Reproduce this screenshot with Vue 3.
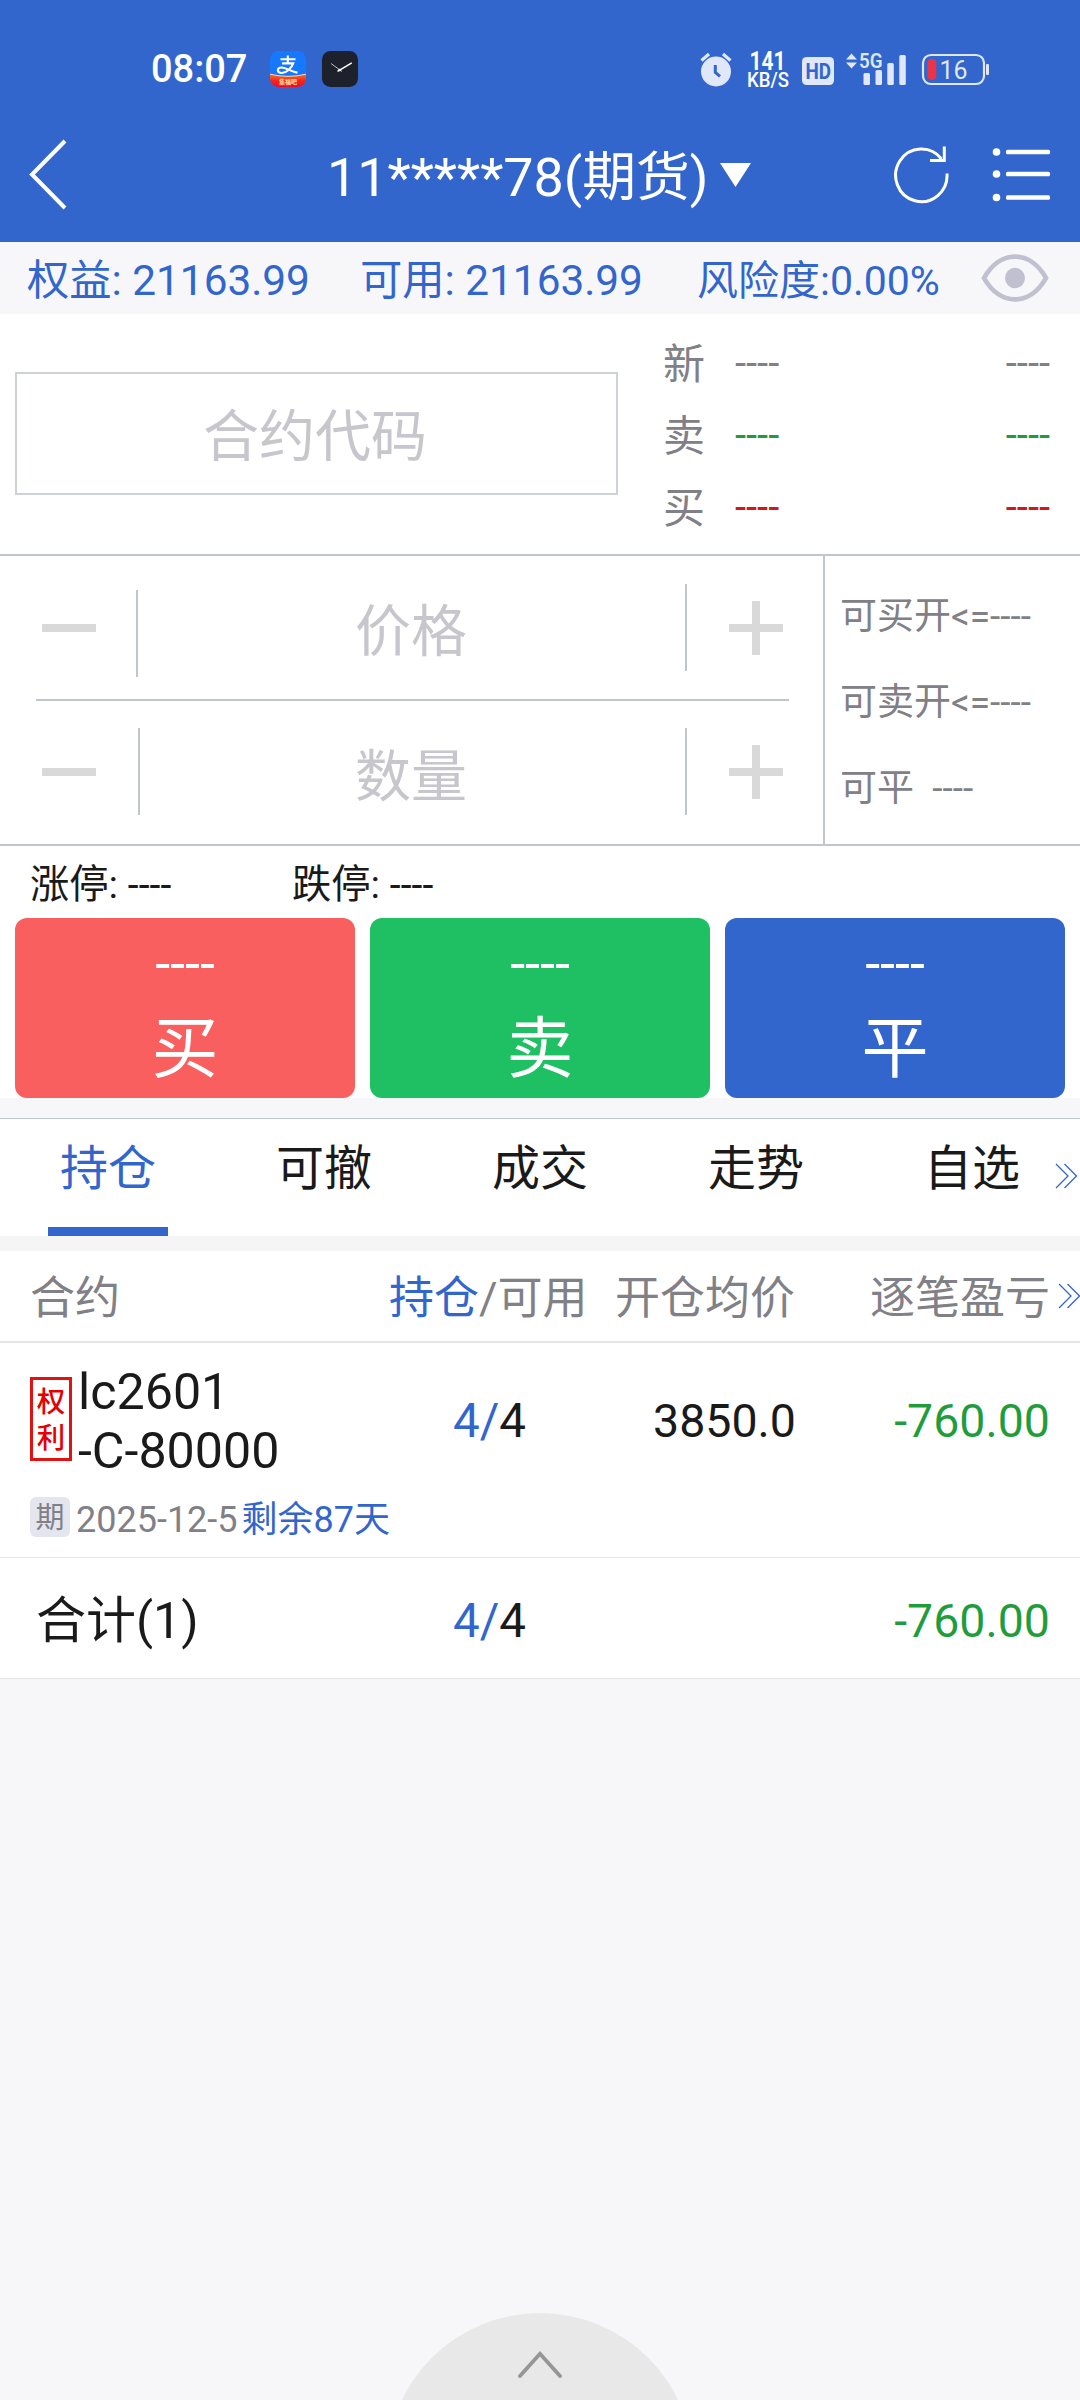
<script setup>
const quotes = [
  { label: '新', tone: 'flat' },
  { label: '卖', tone: 'down' },
  { label: '买', tone: 'up' },
]
const limits = ['可买开<=----', '可卖开<=----', '可平  ----']
const actions = [
  { label: '买', tone: 'buy' },
  { label: '卖', tone: 'sell' },
  { label: '平', tone: 'close' },
]
const tabs = ['持仓', '可撤', '成交', '走势', '自选']
</script>

<template>
  <div class="page">
    <header class="top">
      <div class="status">
        <span class="time">08:07</span>
        <svg class="app-icon" width="36" height="36" viewBox="0 0 36 36">
          <defs>
            <linearGradient id="ribbon" x1="0" y1="0" x2="0" y2="1">
              <stop offset="0" stop-color="#f7702a" />
              <stop offset="0.5" stop-color="#f5271f" />
              <stop offset="1" stop-color="#f0082c" />
            </linearGradient>
            <clipPath id="tile"><rect width="36" height="36" rx="8.5" /></clipPath>
          </defs>
          <g clip-path="url(#tile)">
            <rect width="36" height="36" fill="#1677ff" />
            <path d="M0 23.2Q18 27.5 36 23.2V36H0Z" fill="url(#ribbon)" />
            <path d="M0 23.2Q18 27.5 36 23.2" fill="none" stroke="#ffd9a0" stroke-width="1" />
          </g>
          <path
            d="M10.5 8.2H25.5M17.8 4.5V12.2M12 12.4H23.2C21.5 17.2 16.5 21.8 11.8 22C6.6 22 6.6 16.6 11.4 16.5C16 16.5 20.5 20.6 27.5 21.6"
            fill="none" stroke="#fff" stroke-width="2.1"
          />
          <text x="18" y="33" text-anchor="middle" font-size="6" font-weight="700" fill="#ffe3b0">集福吧</text>
        </svg>
        <svg class="app-icon second" width="36" height="36" viewBox="0 0 36 36">
          <rect width="36" height="36" rx="8.5" fill="#1d212c" />
          <path d="M9 12.5L20 20.5" stroke="#b9bdc6" stroke-width="1" />
          <path d="M15.5 20.3L29.8 11.8" stroke="#fff" stroke-width="1.5" />
          <circle cx="17.7" cy="19" r="1.3" fill="#fff" />
        </svg>
        <svg class="sys" width="292" height="44" viewBox="0 0 292 44" fill="#dfe7f8">
          <circle cx="16" cy="24.5" r="15" />
          <path d="M1.5 13.5L9 7M30.5 13.5L23 7" stroke="#dfe7f8" stroke-width="3.2" />
          <path d="M15.3 18V25.3L20 29.3" fill="none" stroke="#3266cc" stroke-width="3" />
          <text x="49.5" y="22.5" font-size="25" font-weight="700" fill="#fff" textLength="36" lengthAdjust="spacingAndGlyphs">141</text>
          <text x="47" y="40" font-size="19.5" font-weight="500" fill="#fff" textLength="42" lengthAdjust="spacingAndGlyphs">KB/S</text>
          <rect x="102" y="10" width="32" height="28" rx="4.5" />
          <text x="105.5" y="32" font-size="22.5" font-weight="700" fill="#3266cc" textLength="25.5" lengthAdjust="spacingAndGlyphs">HD</text>
          <path d="M151.5 6.5L157 12.5H146ZM151.5 21.5L157 15.5H146Z" />
          <text x="159" y="21" font-size="21" font-weight="600" textLength="23.5" lengthAdjust="spacingAndGlyphs">5G</text>
          <rect x="163.5" y="26" width="6.5" height="12" rx="1.5" />
          <rect x="175.5" y="23" width="6.5" height="15" rx="1.5" />
          <rect x="187.3" y="16" width="6.5" height="22" rx="1.5" />
          <rect x="199.3" y="8" width="6.5" height="30" rx="1.5" />
          <rect x="223" y="8" width="61" height="29" rx="8" fill="none" stroke="#dfe7f8" stroke-width="2.2" />
          <rect x="227.3" y="12" width="9" height="21" rx="4" fill="#ea3447" />
          <rect x="286" y="17" width="3" height="11" rx="1" />
          <text x="239.5" y="31.5" font-size="26" textLength="28" lengthAdjust="spacingAndGlyphs">16</text>
        </svg>
      </div>
      <div class="titlebar">
        <svg class="back" width="40" height="72" viewBox="0 0 40 72" fill="none" stroke="#fff" stroke-width="4">
          <path d="M37 2L4 35.5L37 69" />
        </svg>
        <span class="title">11*****78(期货)</span>
        <svg width="31" height="24" viewBox="0 0 31 24"><path d="M0 0H31L15.5 24Z" fill="#fff" /></svg>
        <svg class="refresh" width="56" height="58" viewBox="0 0 56 58" fill="none" stroke="#fff" stroke-width="3">
          <path d="M53 27.5A25.7 26.3 0 1 1 47.5 13" />
          <path d="M50.3 0.5V14.5H36" />
        </svg>
        <svg class="list" width="60" height="56" viewBox="0 0 60 56" fill="#fff">
          <circle cx="4.5" cy="5" r="3.8" /><circle cx="4.5" cy="27" r="3.8" /><circle cx="4.5" cy="50.5" r="3.8" />
          <rect x="14" y="2.8" width="44" height="4.5" rx="1.5" />
          <rect x="14" y="24.8" width="44" height="4.5" rx="1.5" />
          <rect x="14" y="48.3" width="44" height="4.5" rx="1.5" />
        </svg>
      </div>
    </header>

    <section class="account">
      <span class="equity">权益: 21163.99</span>
      <span class="avail">可用: 21163.99</span>
      <span class="risk">风险度:0.00%</span>
      <svg width="68" height="50" viewBox="0 0 68 50">
        <path d="M3 25C19-3.5 49-3.5 65 25C49 53.5 19 53.5 3 25Z" fill="none" stroke="#c1c0d1" stroke-width="4.6" />
        <ellipse cx="34" cy="25" rx="10" ry="10.3" fill="#c1c0d1" />
      </svg>
    </section>

    <section class="contract">
      <div class="code">合约代码</div>
      <div class="quotes">
        <div v-for="q in quotes" :key="q.label" class="quote">
          <span class="q-label">{{ q.label }}</span>
          <span class="q-val" :class="q.tone">----</span>
          <span class="q-val" :class="q.tone">----</span>
        </div>
      </div>
    </section>

    <section class="order">
      <div class="steppers">
        <div class="stepper price">
          <svg class="minus" width="54" height="8"><rect width="54" height="8" fill="#d9d9d9" /></svg>
          <i class="bar left"></i>
          <span class="hint">价格</span>
          <i class="bar right"></i>
          <svg class="plus" width="54" height="54"><path d="M0 23H54V31H0ZM23 0H31V54H23Z" fill="#d9d9d9" /></svg>
        </div>
        <div class="stepper amount">
          <svg class="minus" width="54" height="8"><rect width="54" height="8" fill="#d9d9d9" /></svg>
          <i class="bar left"></i>
          <span class="hint">数量</span>
          <i class="bar right"></i>
          <svg class="plus" width="54" height="54"><path d="M0 23H54V31H0ZM23 0H31V54H23Z" fill="#d9d9d9" /></svg>
        </div>
      </div>
      <div class="limits">
        <span v-for="l in limits" :key="l">{{ l }}</span>
      </div>
    </section>

    <section class="range">
      <span>涨停: ----</span>
      <span>跌停: ----</span>
    </section>
    <section class="actions">
      <div v-for="a in actions" :key="a.tone" class="action" :class="a.tone">
        <span class="a-price">----</span>
        <span class="a-label">{{ a.label }}</span>
      </div>
    </section>

    <nav class="tabs">
      <div v-for="(t, i) in tabs" :key="t" class="tab" :class="{ active: i === 0 }">{{ t }}</div>
      <svg class="more" width="23" height="26" viewBox="0 0 23 26" fill="none" stroke="#3266cc" stroke-width="1.3">
        <path d="M1 1L13 13L1 25M9.5 1L21.5 13L9.5 25" />
      </svg>
    </nav>

    <section class="table">
      <div class="row head">
        <span>合约</span>
        <span><b>持仓</b>/可用</span>
        <span class="num">开仓均价</span>
        <span class="num">逐笔盈亏</span>
        <svg class="more" width="23" height="26" viewBox="0 0 23 26" fill="none" stroke="#3266cc" stroke-width="1.3">
          <path d="M1 1L13 13L1 25M9.5 1L21.5 13L9.5 25" />
        </svg>
      </div>
      <div class="position">
        <div class="row">
          <div class="name">
            <span class="right-tag">权<br />利</span>
            <span class="symbol">lc2601<br />-C-80000</span>
          </div>
          <span class="qty"><b>4/</b>4</span>
          <span class="num">3850.0</span>
          <span class="num green">-760.00</span>
        </div>
        <div class="expiry">
          <span class="tag">期</span>
          <span class="date">2025-12-5</span>
          <span class="remain">剩余87天</span>
        </div>
      </div>
      <div class="row total">
        <span class="sum">合计(1)</span>
        <span class="qty"><b>4/</b>4</span>
        <span></span>
        <span class="num green">-760.00</span>
      </div>
    </section>

    <footer class="drawer">
      <div class="handle">
        <svg width="46" height="28" viewBox="0 0 46 28" fill="none" stroke="#969696" stroke-width="3.8" stroke-linecap="round">
          <path d="M3 25L23 2.8L43 25" />
        </svg>
      </div>
    </footer>
  </div>
</template>

<style>
body { margin: 0; background: #f7f7fa; }
</style>

<style scoped>
.page {
  width: 1080px;
  height: 2400px;
  display: flex;
  flex-direction: column;
  overflow: hidden;
  background: #f7f7fa;
  color: #1a1a1a;
  font-family: Roboto, "Noto Sans CJK SC", sans-serif;
  white-space: nowrap;
}
.page > * { flex: none; box-sizing: border-box; }
svg { display: block; flex: none; }
b { font-weight: 400; color: #3266cc; }

.top { height: 242px; background: #3266cc; color: #fff; }
.status { display: flex; align-items: center; height: 110px; padding: 27px 0 0 151px; box-sizing: border-box; }
.time { width: 119px; padding-top: 1px; font-size: 38px; line-height: 44px; font-weight: 500; }
.second { margin-left: 16px; }
.sys { margin-left: 342px; }
.titlebar { display: flex; align-items: center; height: 129px; padding-left: 28px; }
.title { width: 393px; margin-left: 259px; padding-top: 7px; font-size: 53.8px; line-height: 64px; }
.refresh { margin-left: 143px; }
.list { margin-left: 42px; }

.account { display: flex; align-items: center; height: 72px; padding-left: 27px; color: #3266cc; font-size: 42.3px; line-height: 50px; }
.account span { padding-top: 5px; }
.equity { width: 333px; }
.avail { width: 337px; }
.risk { width: 284px; font-size: 41px; }

.contract { display: flex; height: 240px; background: #fff; }
.code {
  box-sizing: border-box;
  width: 603px;
  height: 123px;
  margin: 58px 0 0 15px;
  padding: 4px 3px 0 0;
  border: 2px solid #ced2d6;
  color: #c7c6cd;
  font-size: 56px;
  line-height: 119px;
  text-align: center;
}
.quotes { width: 387px; margin-left: 45px; padding-top: 15px; }
.quote { display: flex; height: 72px; align-items: center; }
.q-label { width: 72px; font-size: 42px; line-height: 50px; color: #808086; }
.q-val { padding-bottom: 3px; font-size: 40px; line-height: 48px; }
.q-val:last-child { margin-left: auto; }
.flat { color: #808086; }
.down { color: #1f9d3d; }
.up { color: #d11919; }

.order { display: flex; height: 292px; background: #fff; border-top: 2px solid #c1c6cb; border-bottom: 2px solid #c1c6cb; }
.steppers { width: 823px; border-right: 2px solid #c1c6cb; }
.stepper { display: flex; align-items: flex-start; box-sizing: border-box; height: 145px; margin: 0 34px 0 36px; padding-left: 6px; }
.price { border-bottom: 2px solid #c1c6cb; }
.minus { margin-top: 68px; }
.amount .minus { margin-top: 67px; }
.bar { width: 2px; height: 87px; background: #c1c6cb; }
.left { margin: 34px 0 0 40px; }
.right { margin-top: 28px; }
.amount .left { margin: 27px 0 0 42px; }
.amount .right { margin-top: 27px; }
.hint { box-sizing: border-box; width: 547px; padding: 43px 1px 0 0; font-size: 56px; line-height: 66px; text-align: center; color: #c7c6cd; }
.amount .hint { width: 545px; padding: 43px 3px 0 0; }
.plus { margin: 45px 0 0 42px; }
.amount .plus { margin-top: 44px; }
.limits { display: flex; flex-direction: column; padding: 18px 0 0 15px; font-size: 37px; line-height: 86px; color: #808086; white-space: pre; }

.range { display: flex; height: 72px; padding: 14px 0 0 30px; background: #fff; font-size: 39.3px; line-height: 50px; }
.range span { width: 262px; }
.actions { display: flex; gap: 15px; height: 180px; padding: 0 15px; background: #fff; }
.action { flex: 1; display: flex; flex-direction: column; align-items: center; border-radius: 12px; color: #fff; }
.a-price { padding-top: 16px; font-size: 54px; line-height: 60px; }
.a-label { margin-top: 11px; font-size: 67px; line-height: 88px; }
.buy { background: #f95f5f; }
.sell { background: #1fc063; }
.close { background: #3266cc; }

.tabs { position: relative; display: flex; height: 118px; margin-top: 20px; border-top: 1px solid #c1c6cb; background: #fff; }
.tab { display: flex; flex-direction: column; align-items: center; width: 216px; padding-top: 20px; font-size: 48px; line-height: 60px; }
.active { color: #3266cc; }
.active::after { content: ""; width: 120px; height: 9px; margin-top: auto; background: #3266cc; }
.more { position: absolute; right: 2px; top: 44px; }

.table { border-top: 15px solid #f5f5f5; background: #fff; }
.row { position: relative; display: grid; grid-template-columns: 359px 199px 208px 254px; align-items: center; padding: 0 30px; font-size: 46.5px; line-height: 60px; }
.head { box-sizing: border-box; height: 92px; padding-top: 6px; border-bottom: 2px solid #e5e5e5; font-size: 45px; line-height: 54px; color: #808086; }
.head .more { right: -1px; top: 32px; }
.num { text-align: right; }
.head .num:nth-child(3) { padding-right: 1px; }
.green { color: #1f9d3d; }
.qty { padding-left: 2px; text-align: center; font-size: 47.5px; }
.position { box-sizing: border-box; height: 215px; padding-top: 18px; border-bottom: 1px solid #e5e5e5; }
.name { display: flex; align-items: center; }
.right-tag {
  box-sizing: border-box;
  width: 42px;
  height: 84px;
  margin: 0 6px 4px 0;
  padding-top: 5px;
  border: 3px solid #e01212;
  color: #e60000;
  font-size: 28.5px;
  font-weight: 500;
  line-height: 36px;
  text-align: center;
}
.symbol { padding-top: 1px; font-size: 50.2px; line-height: 59px; }
.expiry { display: flex; align-items: center; height: 40px; margin-top: 17px; padding-left: 30px; font-size: 36px; line-height: 40px; color: #808086; }
.tag { width: 40px; height: 40px; border-radius: 6px; background: #e3e6ef; font-size: 29px; line-height: 42px; text-align: center; }
.date { margin-left: 6px; padding-top: 6px; }
.remain { margin-left: 4px; padding-top: 6px; color: #3266cc; }
.total { box-sizing: border-box; height: 121px; padding-top: 5px; border-bottom: 1px solid #e5e5e5; }
.sum { padding-left: 6px; font-size: 50px; line-height: 60px; }

.drawer { display: flex; justify-content: center; height: 87px; margin-top: auto; overflow: hidden; }
.handle { display: flex; justify-content: center; box-sizing: border-box; width: 306px; height: 306px; padding-top: 38px; border-radius: 50%; background: #e8e8e9; }
</style>
